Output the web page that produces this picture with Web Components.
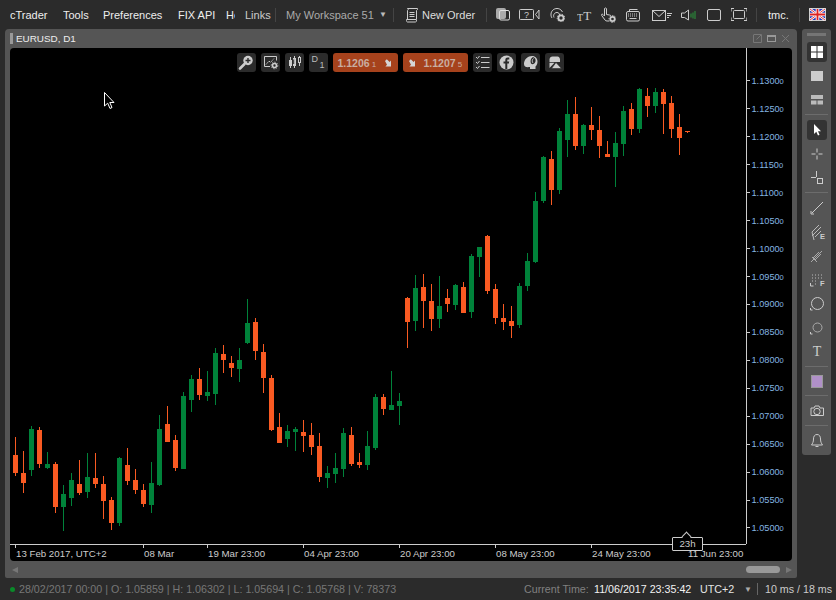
<!DOCTYPE html>
<html><head><meta charset="utf-8"><title>cTrader</title>
<style>
html,body{margin:0;height:100%;background:#2b2b2b;overflow:hidden}
body{font:11px "Liberation Sans",Arial,sans-serif;color:#ddd}
</style></head><body>
<tc-app></tc-app>
<script>
const S='fill="none" stroke="currentColor"';
const ICONS={
order:[15,16,`<g ${S}><path d="M3.5 1.5H13.5V2.5L12.5 3.5V12.5H2.5V13.5C2.5 14.5 3 15 3.5 15H11.5C12 15 12.5 14.5 12.5 13M3.5 1.5C4.5 1.5 4.5 3 3.5 3.5V12.5"/><path d="M5.5 5.5H10.5M5.5 7.5H10.5M5.5 9.5H10.5"/></g>`],
copy:[14,13,`<rect x="0" y="0" width="10" height="11" rx="2" fill="#aaa"/><rect x="3.5" y="2.5" width="10" height="9.5" rx="1.5" fill="none" stroke="#ddd"/>`],
video:[21,13,`<g ${S}><rect x=".5" y="1.5" width="14" height="10" rx="1"/><path d="M20 2V11L16.5 6.5Z"/></g><text x="7.5" y="10" text-anchor="middle" font-family="Liberation Sans" font-size="9" fill="currentColor">?</text>`],
gearchart:[15,15,`<g ${S}><path d="M2 11C.5 9 .5 5 3 3C5 1 9 1 11 3L12.5 5M4 10.5C3 8.5 4 5.5 7 5.5C8.5 5.5 9.5 6.5 9.5 8"/></g><circle cx="11" cy="11" r="2.6" fill="none" stroke="currentColor" stroke-width="1.8"/><circle cx="11" cy="11" r="3.8" fill="none" stroke="currentColor" stroke-width=".9" stroke-dasharray="1.4 1.2"/>`],
tt:[15,14,`<g font-family="Liberation Serif" fill="currentColor"><text x="0" y="12.5" font-size="10">T</text><text x="6.200" y="12" font-size="13">T</text></g>`],
hand:[15,16,`<g ${S}><path d="M3.5 1.5C4.5 .5 5.5 1 5.5 2V7.5L8.5 8C9.5 8.2 10 8.5 10 9M3.5 1.5V9L2 7.5C1 6.5 0 7.5.7 8.5L4 13C4.5 13.7 5 14 6 14H8"/></g><circle cx="11.5" cy="12" r="2.2" fill="none" stroke="currentColor" stroke-width="1.7"/><circle cx="11.5" cy="12" r="3.5" fill="none" stroke="currentColor" stroke-width=".9" stroke-dasharray="1.4 1.2"/>`],
keyboard:[14,14,`<g ${S}><rect x=".5" y="3.5" width="13" height="9.5" rx="1.5"/><path d="M3.5 3V1.5H11.5"/><path d="M2 6H12M2 8H12" stroke-dasharray="1 1"/><path d="M3.5 10.5H10.5"/></g>`],
mail:[20,12,`<g ${S}><rect x=".5" y="1.5" width="13" height="10"/><path d="M.5 1.5L7 7.5L13.5 1.5"/><path d="M15 4.5H20M15 6.5H19M15 8.5H17"/></g>`],
sound:[15,12,`<g ${S}><path d="M.5 4H3.5L7.5 1V11L3.5 8.5H.5Z"/></g><path d="M10 4.5V8.5M12 3.5V9.5M14 2V10" stroke="#2a9a3c" fill="none" stroke-width="1"/>`],
square:[14,12,`<rect x=".5" y=".5" width="13" height="11" rx="1.5" fill="none" stroke="currentColor"/>`],
full:[16,13,`<g ${S}><rect x="2.5" y="2.5" width="11" height="8" rx="1"/><path d="M0 3.5V.5H3M13 .5H16V3.5M16 9.5V12.5H13M3 12.5H0V9.5" stroke-width="1.2"/></g>`],
flag:[17,13,`<rect x=".5" y=".5" width="16" height="12" fill="#2436b8" stroke="#cfcfcf"/><path d="M1 1L16 12M16 1L1 12" stroke="#fff" stroke-width="2.4"/><path d="M1 1L16 12M16 1L1 12" stroke="#d22" stroke-width=".9"/><path d="M8.5 1V12M1 6.5H16" stroke="#fff" stroke-width="3.6"/><path d="M8.5 1V12M1 6.5H16" stroke="#d22" stroke-width="1.8"/>`],
zoom:[19,19,`<circle cx="11" cy="7.5" r="4.7" fill="#ccc"/><path d="M7.5 11L3 15.5" stroke="#ccc" stroke-width="2.6" stroke-linecap="round"/><path d="M8.5 7.5H13.5M11 5V10" stroke="#2b2b2b" stroke-width="1.4"/>`],
chartgear:[19,19,`<g fill="none" stroke="#ccc"><path d="M3.5 13.5V3.5H15.500V7.500M3.5 13.5H9"/><path d="M5 11.5L8 8L9.5 9.5L13 5.5" stroke-dasharray="1.5 .8"/></g><circle cx="13.5" cy="12.5" r="2" fill="none" stroke="#ccc" stroke-width="1.6"/><circle cx="13.5" cy="12.5" r="3.3" fill="none" stroke="#ccc" stroke-width="1" stroke-dasharray="1.3 1.2"/>`],
candles:[19,19,`<g stroke="#ccc" fill="none"><path d="M5.5 4V15M9.5 3V15M14.5 3V13"/></g><g fill="#ccc"><rect x="4" y="7" width="3" height="6"/><rect x="8" y="5" width="3" height="8"/><rect x="13" y="4" width="3" height="6"/></g><path d="M8.7 6.5V11M14.5 5V9" stroke="#2b2b2b"/>`],
arrowdown:[8,8,`<path d="M0 2L1.800 .2L4.600 3L6 1.500V7.500H.4L2 5.800Z" fill="#d5d5d5"/>`],
check:[19,19,`<g fill="none" stroke="#ccc"><path d="M8 4.500H16.500M8 9.500H16.500M8 14.500H16.500" stroke-width="1.2"/><path d="M3 4L4.500 5.500L6.500 3M3 9L4.500 10.500L6.500 8M3 14L4.500 15.500L6.500 13"/></g>`],
fb:[19,19,`<circle cx="9.500" cy="9.500" r="7" fill="#ccc"/><path d="M8.300 16V10.500H6.500V8.500H8.300V7C8.300 5.300 9.300 4.500 10.700 4.500H12.300V6.500H11.200C10.500 6.500 10.300 6.800 10.300 7.400V8.500H12.200L11.900 10.500H10.300V16Z" fill="#2b2b2b"/>`],
head:[19,19,`<path d="M3 11C3 6 7 3 11 3C14.500 3 16.500 5.500 16.500 8.500C16.500 11 15.500 12.500 14.500 13.500V16H9V14C5.500 14.500 3 14 3 11Z" fill="#ccc"/><path d="M12 4C9.500 5.500 9 8 10 10.500C11.500 12 13.500 11 14.500 8.500C15 6.500 14 4.500 12 4Z" fill="#2b2b2b"/><path d="M12.500 5.500C11 6.500 11 8.500 11.800 9.800" stroke="#ccc" fill="none"/>`],
shape:[19,19,`<path d="M4.500 9V6.500C4.500 4.500 6 3.500 7.500 3.500H12.500C14 3.500 15 5 15 6.500V9Z" fill="#ccc"/><path d="M4.500 9.800H9.500L4.500 15Z" fill="#ccc"/><path d="M11 9.500L16.500 15.500H6.500Z" fill="#ccc" stroke="#2b2b2b" stroke-width=".6"/>`],
grid:[20,20,`<g fill="#fff"><rect x="4" y="4" width="5.500" height="5.500"/><rect x="10.500" y="4" width="5.500" height="5.500"/><rect x="4" y="10.500" width="5.500" height="5.500"/><rect x="10.500" y="10.500" width="5.500" height="5.500"/></g>`],
single:[20,20,`<rect x="4" y="5" width="12" height="10" fill="#ccc"/>`],
layout:[20,20,`<g fill="#bbb"><rect x="4" y="5" width="12" height="4"/><rect x="4" y="10.500" width="5.500" height="4"/><rect x="10.500" y="10.500" width="5.500" height="4"/></g>`],
cursor:[20,20,`<path d="M7 4V14L9.300 11.800L11 15.500L12.500 14.800L11 11.200H14Z" fill="#fff"/>`],
cross:[20,20,`<path d="M10 4.500V8.500M10 11.500V15.500M4.500 10H8.500M11.500 10H15.500" stroke="#ccc" fill="none"/>`],
measure:[20,20,`<path d="M9.500 3V9M4 9.500H9M10 10.500" stroke="#ccc" fill="none"/><rect x="10.500" y="10.500" width="5" height="5" fill="none" stroke="#ccc"/>`],
line:[20,20,`<path d="M16 4L5 15" stroke="#ccc" fill="none"/><path d="M4 13V16H7" stroke="#ccc" fill="none"/>`],
fibe:[20,20,`<path d="M5 10L12 3M5 14L14 5M8 15L14 9M5 10L7 18" stroke="#bbb" fill="none"/><text x="13" y="17" font-family="Liberation Sans" font-size="7.500" font-weight="700" fill="#ccc">E</text>`],
hatch:[20,20,`<path d="M4 16L15 5M6 12L12 6M8 14L14 8M4 16L7 13" stroke="#aaa" fill="none"/><path d="M5 11L10 16" stroke="#aaa" fill="none"/>`],
fibf:[20,20,`<path d="M5 5H15M5 8H15M5 11H11M8 14H11" stroke="#bbb" stroke-dasharray="1 2" fill="none"/><path d="M3.500 13V16H6.500" stroke="#ccc" fill="none"/><text x="13" y="16" font-family="Liberation Sans" font-size="7.500" font-weight="700" fill="#ccc">F</text>`],
circle:[20,20,`<circle cx="10.500" cy="9.500" r="6" fill="none" stroke="#ccc"/><path d="M3.500 14V16H5.500" stroke="#ccc" fill="none"/>`],
circle2:[20,20,`<circle cx="10.500" cy="9.500" r="4.500" fill="none" stroke="#aaa"/><path d="M3.500 14V16H5.500" stroke="#ccc" fill="none"/>`],
t:[20,20,`<text x="10" y="14" text-anchor="middle" font-family="Liberation Serif" font-size="14" fill="#ccc">T</text>`],
swatch:[20,20,`<rect x="4.500" y="3.500" width="11" height="12" fill="#b090c8" stroke="#999"/>`],
camera:[20,20,`<path d="M4 7H7L8 5H12L13 7H16.500V14.500H4Z" fill="none" stroke="#ccc"/><circle cx="10" cy="10.500" r="3.200" fill="none" stroke="#ccc"/>`],
bell:[20,20,`<path d="M10 3.500C7.500 3.500 6.500 5.500 6.500 8C6.500 11 5.500 12.500 4.500 14H15.500C14.500 12.500 13.500 11 13.500 8C13.500 5.500 12.500 3.500 10 3.500ZM8.500 15.500H11.500" fill="none" stroke="#ccc"/>`],
popout:[9,9,`<path d="M7 .5H1M.5 .5V8.500H8.500V3M3.500 5.500L8 1M5.500 .5H8.500V3.500" fill="none" stroke="#777"/>`],
max:[9,9,`<rect x=".5" y="1.500" width="8" height="6" fill="none" stroke="#999"/><path d="M1 2H8" stroke="#999" stroke-width="2"/>`],
close:[9,9,`<path d="M1 1L8 8M8 1L1 8" stroke="#777" fill="none"/>`],
pointer:[12,18,`<path d="M.5 .5V14L3.700 11.200L6 16.500L8 15.500L5.800 10.500H10Z" fill="#000" stroke="#fff"/>`]
};
function def(name,css,html,init){
  customElements.define(name,class extends HTMLElement{
    constructor(){super();const r=this.attachShadow({mode:'open'});r.innerHTML=`<style>${css}</style>${typeof html==='function'?html(this):html}`;}
    connectedCallback(){if(init&&!this._d){this._d=1;init(this.shadowRoot,this);}}
  });
}
customElements.define('tc-icon',class extends HTMLElement{
  constructor(){super();this.attachShadow({mode:'open'});}
  connectedCallback(){const [w,h,s]=ICONS[this.getAttribute('name')];
    this.shadowRoot.innerHTML=`<style>:host{display:inline-flex;flex:none;color:#ccc;line-height:0}</style><svg xmlns="http://www.w3.org/2000/svg" width="${w}" height="${h}" viewBox="0 0 ${w} ${h}">${s}</svg>`;}
});

def('tc-menubar',`
:host{display:flex;align-items:center;height:29px;flex:none;background:#2b2b2b;font:11px "Liberation Sans",sans-serif;color:#eee;white-space:nowrap;overflow:hidden}
span{display:block;flex:none;overflow:hidden}
.sep{width:1px;height:14px;background:#444}
.ws{color:#aaa}
.caret{font-size:8px;color:#bbb}
`,`
<span style="margin-left:10px;width:53px">cTrader</span>
<span style="width:40px">Tools</span>
<span style="width:75px">Preferences</span>
<span style="width:48px">FIX API</span>
<span style="width:14px;margin-right:5px;clip-path:inset(0 5px 0 0)">He</span>
<span style="margin-left:0;width:30px;color:#ccc">Links</span>
<i class="sep"></i>
<span class="ws" style="margin-left:10px;width:93px">My Workspace 51</span>
<span class="caret" style="width:14px">▼</span>
<i class="sep"></i>
<tc-icon name="order" style="margin-left:10px"></tc-icon>
<span style="margin-left:3px;width:64px;color:#ddd">New Order</span>
<i class="sep"></i>
<tc-icon name="copy" style="margin-left:9px"></tc-icon>
<tc-icon name="video" style="margin-left:9px"></tc-icon>
<tc-icon name="gearchart" style="margin-left:10px"></tc-icon>
<tc-icon name="tt" style="margin-left:12px"></tc-icon>
<tc-icon name="hand" style="margin-left:9px"></tc-icon>
<tc-icon name="keyboard" style="margin-left:10px"></tc-icon>
<tc-icon name="mail" style="margin-left:12px"></tc-icon>
<tc-icon name="sound" style="margin-left:9px"></tc-icon>
<tc-icon name="square" style="margin-left:11px"></tc-icon>
<tc-icon name="full" style="margin-left:10px"></tc-icon>
<i class="sep" style="margin-left:9px"></i>
<span style="margin-left:11px;width:31px">tmc.</span>
<i class="sep"></i>
<tc-icon name="flag" style="margin-left:9px"></tc-icon>
`);

def('tc-btn',`
:host{display:flex;flex:none;align-items:center;justify-content:center;width:19px;height:19px;border-radius:3px;background:#2b2b2b;position:relative;font:9px "Liberation Sans",sans-serif;color:#ccc}
`,`<slot></slot>`);

def('tc-price',`
:host{display:flex;flex:none;align-items:center;width:65px;height:19px;border-radius:3px;background:#a6421c;font:bold 10.500px "Liberation Sans",sans-serif;color:#c9aea2;box-sizing:border-box;padding:0 4px 0 5px;gap:0}
`,`<slot></slot>`);

def('tc-chart-tools',`
:host{display:flex;gap:5px;justify-content:center;position:absolute;left:0;top:5px}
.d{display:grid;grid-template-columns:1fr 1fr;width:100%;height:100%;padding:2px 3px;box-sizing:border-box;color:#bbb;line-height:1}
.d b{font-weight:400;font-size:9px}.d b+b{align-self:end;justify-self:end}
.t{flex:1}
small{font-size:8px;font-weight:400;margin-left:2px}
`,`
<tc-btn><tc-icon name="zoom"></tc-icon></tc-btn>
<tc-btn><tc-icon name="chartgear"></tc-icon></tc-btn>
<tc-btn><tc-icon name="candles"></tc-icon></tc-btn>
<tc-btn><div class="d"><b>D</b><b>1</b></div></tc-btn>
<tc-price><span class="t">1.1206<small>1</small></span><tc-icon name="arrowdown" style="margin-right:1px"></tc-icon></tc-price>
<tc-price><tc-icon name="arrowdown" style="margin:0 7px 0 1px"></tc-icon><span class="t">1.1207<small>5</small></span></tc-price>
<tc-btn><tc-icon name="check"></tc-icon></tc-btn>
<tc-btn><tc-icon name="fb"></tc-icon></tc-btn>
<tc-btn><tc-icon name="head"></tc-icon></tc-btn>
<tc-btn><tc-icon name="shape"></tc-icon></tc-btn>
`);

const CANDLES="O437,455,473,476 O451,473,483,493 G426,429,470,476 O427,430,464,468 G452,464,468,469 O462,464,507,513 G485,494,507,531 G473,480,498,506 O460,484,493,495 G453,477,492,498 O453,478,484,488 O476,484,501,519 O497,500,523,530 G457,458,523,526 O448,465,481,485 O469,480,490,494 O484,490,504,507 G462,483,505,513 G415,429,485,486 O406,424,442,442 O435,440,468,471 G392,396,469,469 G375,379,400,412 O368,379,395,400 G371,392,396,401 G348,353,394,405 O345,354,360,373 O356,363,368,377 G348,360,369,382 G299,323,343,344 O318,322,351,360 O344,352,378,393 O375,378,430,431 O413,427,443,443 G425,431,439,447 G427,429,432,451 O420,432,436,452 O423,435,447,455 O433,446,477,482 G466,473,478,488 G453,468,474,483 G428,433,469,477 O427,435,464,466 O453,462,465,468 G431,446,465,470 G394,397,448,450 O394,397,409,415 G371,405,410,410 G393,401,406,425 O297,298,322,348 G275,288,321,331 O274,287,301,328 O284,301,319,331 G276,306,319,328 O289,298,304,312 G284,285,305,310 O282,287,313,313 G254,256,312,318 G247,247,257,277 O235,236,291,294 O284,289,318,324 O304,318,322,330 O306,321,326,338 G283,286,325,328 G253,261,286,291 G192,201,262,263 G156,157,201,203 O151,159,190,205 G128,131,190,194 G100,114,140,157 O97,114,146,150 G124,125,146,154 O107,125,130,140 O116,130,146,158 O141,154,157,157 G132,143,157,187 G106,111,144,156 O103,109,129,135 G88,89,129,133 O88,96,106,117 G88,92,106,113 O89,92,104,134 O96,103,129,138 O114,127,138,155 O131,131,132,133";
function candleSvg(){
  let s='';
  CANDLES.split(' ').forEach((c,i)=>{
    const col=c[0]==='G'?'#00823a':'#f95a22';const [h,t,b,l]=c.slice(1).split(',').map(Number);const x=15+i*8;
    s+=`<rect x="${x}" y="${h}" width="1" height="${l-h}" fill="${col}"/><rect x="${x-2}" y="${t}" width="5" height="${b-t}" fill="${col}"/>`;
  });
  return s;
}
const PRICES=[];for(let p=11300;p>=10500;p-=50)PRICES.push((p/10000).toFixed(4));

def('tc-chart',`
:host{display:grid;grid-template-columns:736px 1fr;grid-template-rows:496px 1fr;flex:1;background:#000;border-radius:4px;margin:0 5px;overflow:hidden;position:relative;font:9.700px "Liberation Sans",sans-serif}
.plot{position:relative}
svg.c{display:block;width:736px;height:496px}
.y{border-left:1px solid #ccc;padding-top:19px;color:#84b6e2;font-size:9.200px;white-space:nowrap}
.y div{display:flex;align-items:center;height:27.940px;position:relative}
.y i{width:3px;height:1px;background:#ccc;margin-right:1.500px;flex:none}
.y small{font-size:7.500px}
.x{border-top:1px solid #ccc;display:flex;padding-left:5px;color:#ccc;font-size:9.700px;white-space:nowrap;position:relative}
.x span{display:block;flex:none;padding:3px 0 0 1px;background:linear-gradient(#ccc,#ccc) 0 0/1px 3px no-repeat;box-sizing:border-box;line-height:12px}
.tip{position:absolute;left:662px;top:-8px;width:29px;height:12px;border:1px solid #ccc;background:#000;border-radius:1px;color:#ccc;text-align:center;line-height:12px;font-size:9.700px;box-sizing:content-box}
.tip:before{content:"";position:absolute;left:10px;top:-5px;width:6px;height:6px;border-left:1px solid #ccc;border-top:1px solid #ccc;transform:rotate(45deg);background:#000}
.tip b{position:relative;font-weight:400}
.cur{position:absolute;left:94px;top:44px}
`,`
<div class="plot">
 <svg class="c" viewBox="10 48 736 496" shape-rendering="crispEdges">${candleSvg()}</svg>
 <tc-chart-tools style="width:780px"></tc-chart-tools>
 <tc-icon class="cur" name="pointer"></tc-icon>
</div>
<div class="y">${PRICES.map(p=>`<div><i></i><span>${p}<small>0</small></span></div>`).join('')}</div>
<div class="x">
 <span style="width:128px">13 Feb 2017, UTC+2</span>
 <span style="width:64px">08 Mar</span>
 <span style="width:96px">19 Mar 23:00</span>
 <span style="width:96px">04 Apr 23:00</span>
 <span style="width:96px">20 Apr 23:00</span>
 <span style="width:96px">08 May 23:00</span>
 <span style="width:96px">24 May 23:00</span>
 <span style="background:none">11 Jun 23:00</span>
 <div class="tip"><b>23h</b></div>
</div>
<div></div>
`);

def('tc-panel',`
:host{display:flex;flex-direction:column;width:792px;height:549px;margin-left:5px;background:#555;border-radius:4px 4px 2px 2px;flex:none;font:9.900px "Liberation Sans",sans-serif}
.title{display:flex;align-items:center;height:19px;flex:none;padding:0 7px 0 5px;color:#eee}
.grip{width:3px;height:11px;margin-right:3px;background:radial-gradient(circle,#999 .6px,transparent .8px) 0 0/1.500px 1.500px}
.name{flex:1}
.title tc-icon{margin-left:5px}
.bar{display:flex;align-items:center;height:17px;flex:none;padding:0 5px 0 7px}
.l{width:0;height:0;border:3.500px solid transparent;border-right:6px solid #777;border-left:0}
.r{width:0;height:0;border:3.500px solid transparent;border-left:6px solid #777;border-right:0}
.sp{flex:1}
.th{width:34px;height:7px;border-radius:4px;background:#999;margin-right:6px}
`,`
<div class="title"><i class="grip"></i><span class="name">EURUSD, D1</span>
<tc-icon name="popout"></tc-icon><tc-icon name="max"></tc-icon><tc-icon name="close"></tc-icon></div>
<tc-chart></tc-chart>
<div class="bar"><i class="l"></i><i class="sp"></i><i class="th"></i><i class="r"></i></div>
`);

def('tc-sidebar',`
:host{display:flex;flex-direction:column;align-items:center;width:29px;height:426px;margin-left:5px;background:#555;border-radius:3px;flex:none;box-sizing:border-box}
.grip{width:19px;height:3px;margin:4px 0 4px;background:radial-gradient(circle,#999 .6px,transparent .8px) 0 0/2px 2px;flex:none}
.it{height:24px;width:20px;display:flex;align-items:center;justify-content:center;flex:none;border-radius:3px}
.on tc-icon{background:#333;border-radius:3px}
.sep{height:1px;width:23px;background:#6c6c6c;margin:2px 0 3px;flex:none}
.s{height:23px}
`,`
<i class="grip"></i>
<div class="it on"><tc-icon name="grid"></tc-icon></div>
<div class="it"><tc-icon name="single"></tc-icon></div>
<div class="it"><tc-icon name="layout"></tc-icon></div>
<i class="sep"></i>
<div class="it on"><tc-icon name="cursor"></tc-icon></div>
<div class="it"><tc-icon name="cross"></tc-icon></div>
<div class="it"><tc-icon name="measure"></tc-icon></div>
<i class="sep"></i>
<div class="it"><tc-icon name="line"></tc-icon></div>
<div class="it"><tc-icon name="fibe"></tc-icon></div>
<div class="it"><tc-icon name="hatch"></tc-icon></div>
<div class="it"><tc-icon name="fibf"></tc-icon></div>
<div class="it"><tc-icon name="circle"></tc-icon></div>
<div class="it"><tc-icon name="circle2"></tc-icon></div>
<div class="it"><tc-icon name="t"></tc-icon></div>
<i class="sep"></i>
<div class="it s"><tc-icon name="swatch"></tc-icon></div>
<i class="sep"></i>
<div class="it"><tc-icon name="camera"></tc-icon></div>
<i class="sep"></i>
<div class="it"><tc-icon name="bell"></tc-icon></div>
`);

def('tc-statusbar',`
:host{display:flex;align-items:center;height:22px;flex:none;font:10.700px "Liberation Sans",sans-serif;color:#777;white-space:nowrap}
.dot{width:5px;height:5px;border-radius:50%;background:#0a8a2a;margin:0 4px 0 10px;flex:none}
.o{width:505px;flex:none}
.cl{width:70px;flex:none;color:#808080}
.tm{width:106px;flex:none;color:#f2f2f2}
.tz{width:44px;flex:none;color:#e6e6e6}
.car{width:13px;flex:none;color:#aaa;font-size:8px}
.pipe{width:1px;height:12px;background:#666;margin-right:7px;flex:none}
.ms{color:#ccc}
`,`
<i class="dot"></i><span class="o">28/02/2017 00:00 | O: 1.05859 | H: 1.06302 | L: 1.05694 | C: 1.05768 | V: 78373</span>
<span class="cl">Current Time:</span><span class="tm">11/06/2017 23:35:42</span><span class="tz">UTC+2</span><span class="car">▼</span><i class="pipe"></i><span class="ms">10 ms / 18 ms</span>
`);

def('tc-app',`
:host{display:flex;flex-direction:column;width:836px;height:600px;background:#2b2b2b;overflow:hidden}
.main{display:flex;align-items:flex-start;height:549px;flex:none}
`,`<tc-menubar></tc-menubar><div class="main"><tc-panel></tc-panel><tc-sidebar></tc-sidebar></div><tc-statusbar></tc-statusbar>`);
</script>
</body></html>
